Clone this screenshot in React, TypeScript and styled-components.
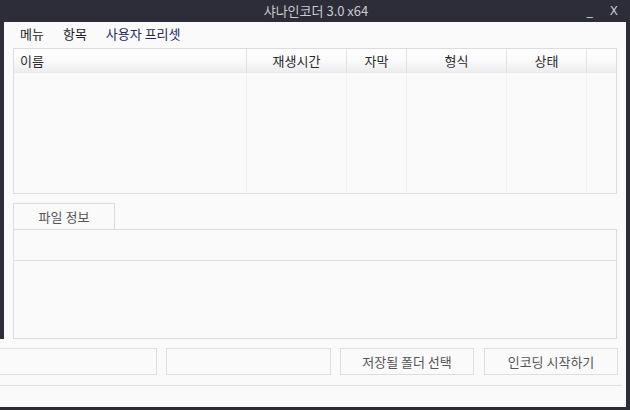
import React from "react";
import styled, { createGlobalStyle } from "styled-components";

const GlobalStyle = createGlobalStyle`
  html, body {
    margin: 0;
    padding: 0;
    background: #2c2d38;
  }
  body {
    font-family: "Noto Sans CJK KR", "Noto Sans", sans-serif;
  }
`;

const columns = [
  { label: "이름", align: "left" },
  { label: "재생시간", align: "center" },
  { label: "자막", align: "center" },
  { label: "형식", align: "center" },
  { label: "상태", align: "center" },
  { label: "", align: "center" },
];

export default function App() {
  return (
    <>
      <GlobalStyle />
      <Frame>
        <TitleBar>
          <Title>샤나인코더 3.0 x64</Title>
          <WindowControls>
            <ControlGlyph>_</ControlGlyph>
            <ControlGlyph>X</ControlGlyph>
          </WindowControls>
        </TitleBar>

        <WindowBody>
          <MenuBar>
            <MenuItem>메뉴</MenuItem>
            <MenuItem>항목</MenuItem>
            <MenuItem $accent>사용자 프리셋</MenuItem>
          </MenuBar>

          <FileTable>
            <HeaderRow>
              {columns.map((col, i) => (
                <HeaderCell key={i} $align={col.align}>
                  {col.label}
                </HeaderCell>
              ))}
            </HeaderRow>
            <BodyRow>
              {columns.map((_, i) => (
                <BodyCell key={i} />
              ))}
            </BodyRow>
          </FileTable>

          <TabStrip>
            <Tab>파일 정보</Tab>
          </TabStrip>
          <TabPanel>
            <PanelHead />
          </TabPanel>

          <ActionArea>
            <ActionRow>
              <PathField $width={157} $noLeft />
              <PathField $width={165} />
              <ActionButton type="button">저장될 폴더 선택</ActionButton>
              <ActionButton type="button">인코딩 시작하기</ActionButton>
            </ActionRow>
            <StatusLine />
          </ActionArea>
        </WindowBody>
      </Frame>
    </>
  );
}

const Frame = styled.div`
  width: 630px;
  height: 410px;
  display: flex;
  flex-direction: column;
  background: #2c2d38;
  overflow: hidden;
`;

const TitleBar = styled.div`
  position: relative;
  height: 22px;
  flex: none;
  display: flex;
  align-items: center;
  justify-content: center;
`;

const Title = styled.div`
  color: #c9c9cf;
  font-size: 13px;
  line-height: 22px;
  padding-left: 2px;
`;

const WindowControls = styled.div`
  position: absolute;
  right: 12px;
  top: 0;
  height: 22px;
  display: flex;
  align-items: center;
  gap: 17px;
`;

const ControlGlyph = styled.span`
  color: #c8c8cf;
  font-family: "DejaVu Sans", sans-serif;
  font-size: 12px;
  line-height: 22px;
`;

const WindowBody = styled.div`
  margin: 0 4px 3px 4px;
  flex: 1;
  display: flex;
  flex-direction: column;
  background: #fafafa;
`;

const MenuBar = styled.div`
  height: 24px;
  display: flex;
  align-items: center;
  gap: 19px;
  padding-left: 16px;
  flex: none;
`;

const MenuItem = styled.span<{ $accent?: boolean }>`
  font-size: 13px;
  color: ${(p) => (p.$accent ? "#23285a" : "#1e1e1e")};
  line-height: 22px;
`;

const FileTable = styled.div`
  margin: 2px 9px 0 9px;
  height: 146px;
  border: 1px solid #dcdcdc;
  box-sizing: border-box;
  display: flex;
  flex-direction: column;
  flex: none;
`;

const gridCols = "232px 100px 60px 100px 80px 1fr";

const HeaderRow = styled.div`
  display: grid;
  grid-template-columns: ${gridCols};
  height: 24px;
  background: linear-gradient(#fdfdfd, #fcfcfc 40%, #ececef);
`;

const HeaderCell = styled.div<{ $align: string }>`
  font-size: 13px;
  color: #2a2a2a;
  line-height: 24px;
  text-align: ${(p) => p.$align};
  padding-left: ${(p) => (p.$align === "left" ? "6px" : "0")};
  & + & {
    border-left: 1px solid #e2e2e2;
  }
`;

const BodyRow = styled.div`
  flex: 1;
  display: grid;
  grid-template-columns: ${gridCols};
`;

const BodyCell = styled.div`
  & + & {
    border-left: 1px solid #eef1f5;
  }
`;

const TabStrip = styled.div`
  margin: 9px 9px 0 9px;
  display: flex;
  flex: none;
`;

const Tab = styled.div`
  width: 102px;
  height: 26px;
  box-sizing: border-box;
  border: 1px solid #dcdcdc;
  border-bottom: none;
  font-size: 13px;
  color: #555;
  text-align: center;
  line-height: 25px;
  background: #fafafa;
`;

const TabPanel = styled.div`
  margin: 0 9px;
  height: 110px;
  box-sizing: border-box;
  border: 1px solid #dcdcdc;
  flex: none;
`;

const PanelHead = styled.div`
  height: 30px;
  border-bottom: 1px solid #e0e0e0;
`;

const ActionArea = styled.div`
  margin-left: -4px;
  padding-top: 9px;
  flex: 1;
  background: #fafafa;
  display: flex;
  flex-direction: column;
`;

const ActionRow = styled.div`
  display: flex;
  gap: 9px;
  height: 27px;
`;

const PathField = styled.div<{ $width: number; $noLeft?: boolean }>`
  width: ${(p) => p.$width}px;
  box-sizing: border-box;
  border: 1px solid #dedede;
  ${(p) => (p.$noLeft ? "border-left: none;" : "")}
  background: #fafafa;
`;

const ActionButton = styled.button`
  width: 134px;
  height: 27px;
  box-sizing: border-box;
  border: 1px solid #dedede;
  background: #fafafa;
  font-family: "Noto Sans CJK KR", "Noto Sans", sans-serif;
  font-size: 13px;
  color: #555;
  padding: 0;
  margin: 0;
  & + & {
    margin-left: 1px;
  }
`;

const StatusLine = styled.div`
  margin-top: 10px;
  margin-right: 4px;
  border-top: 1px solid #e0e0e0;
`;
